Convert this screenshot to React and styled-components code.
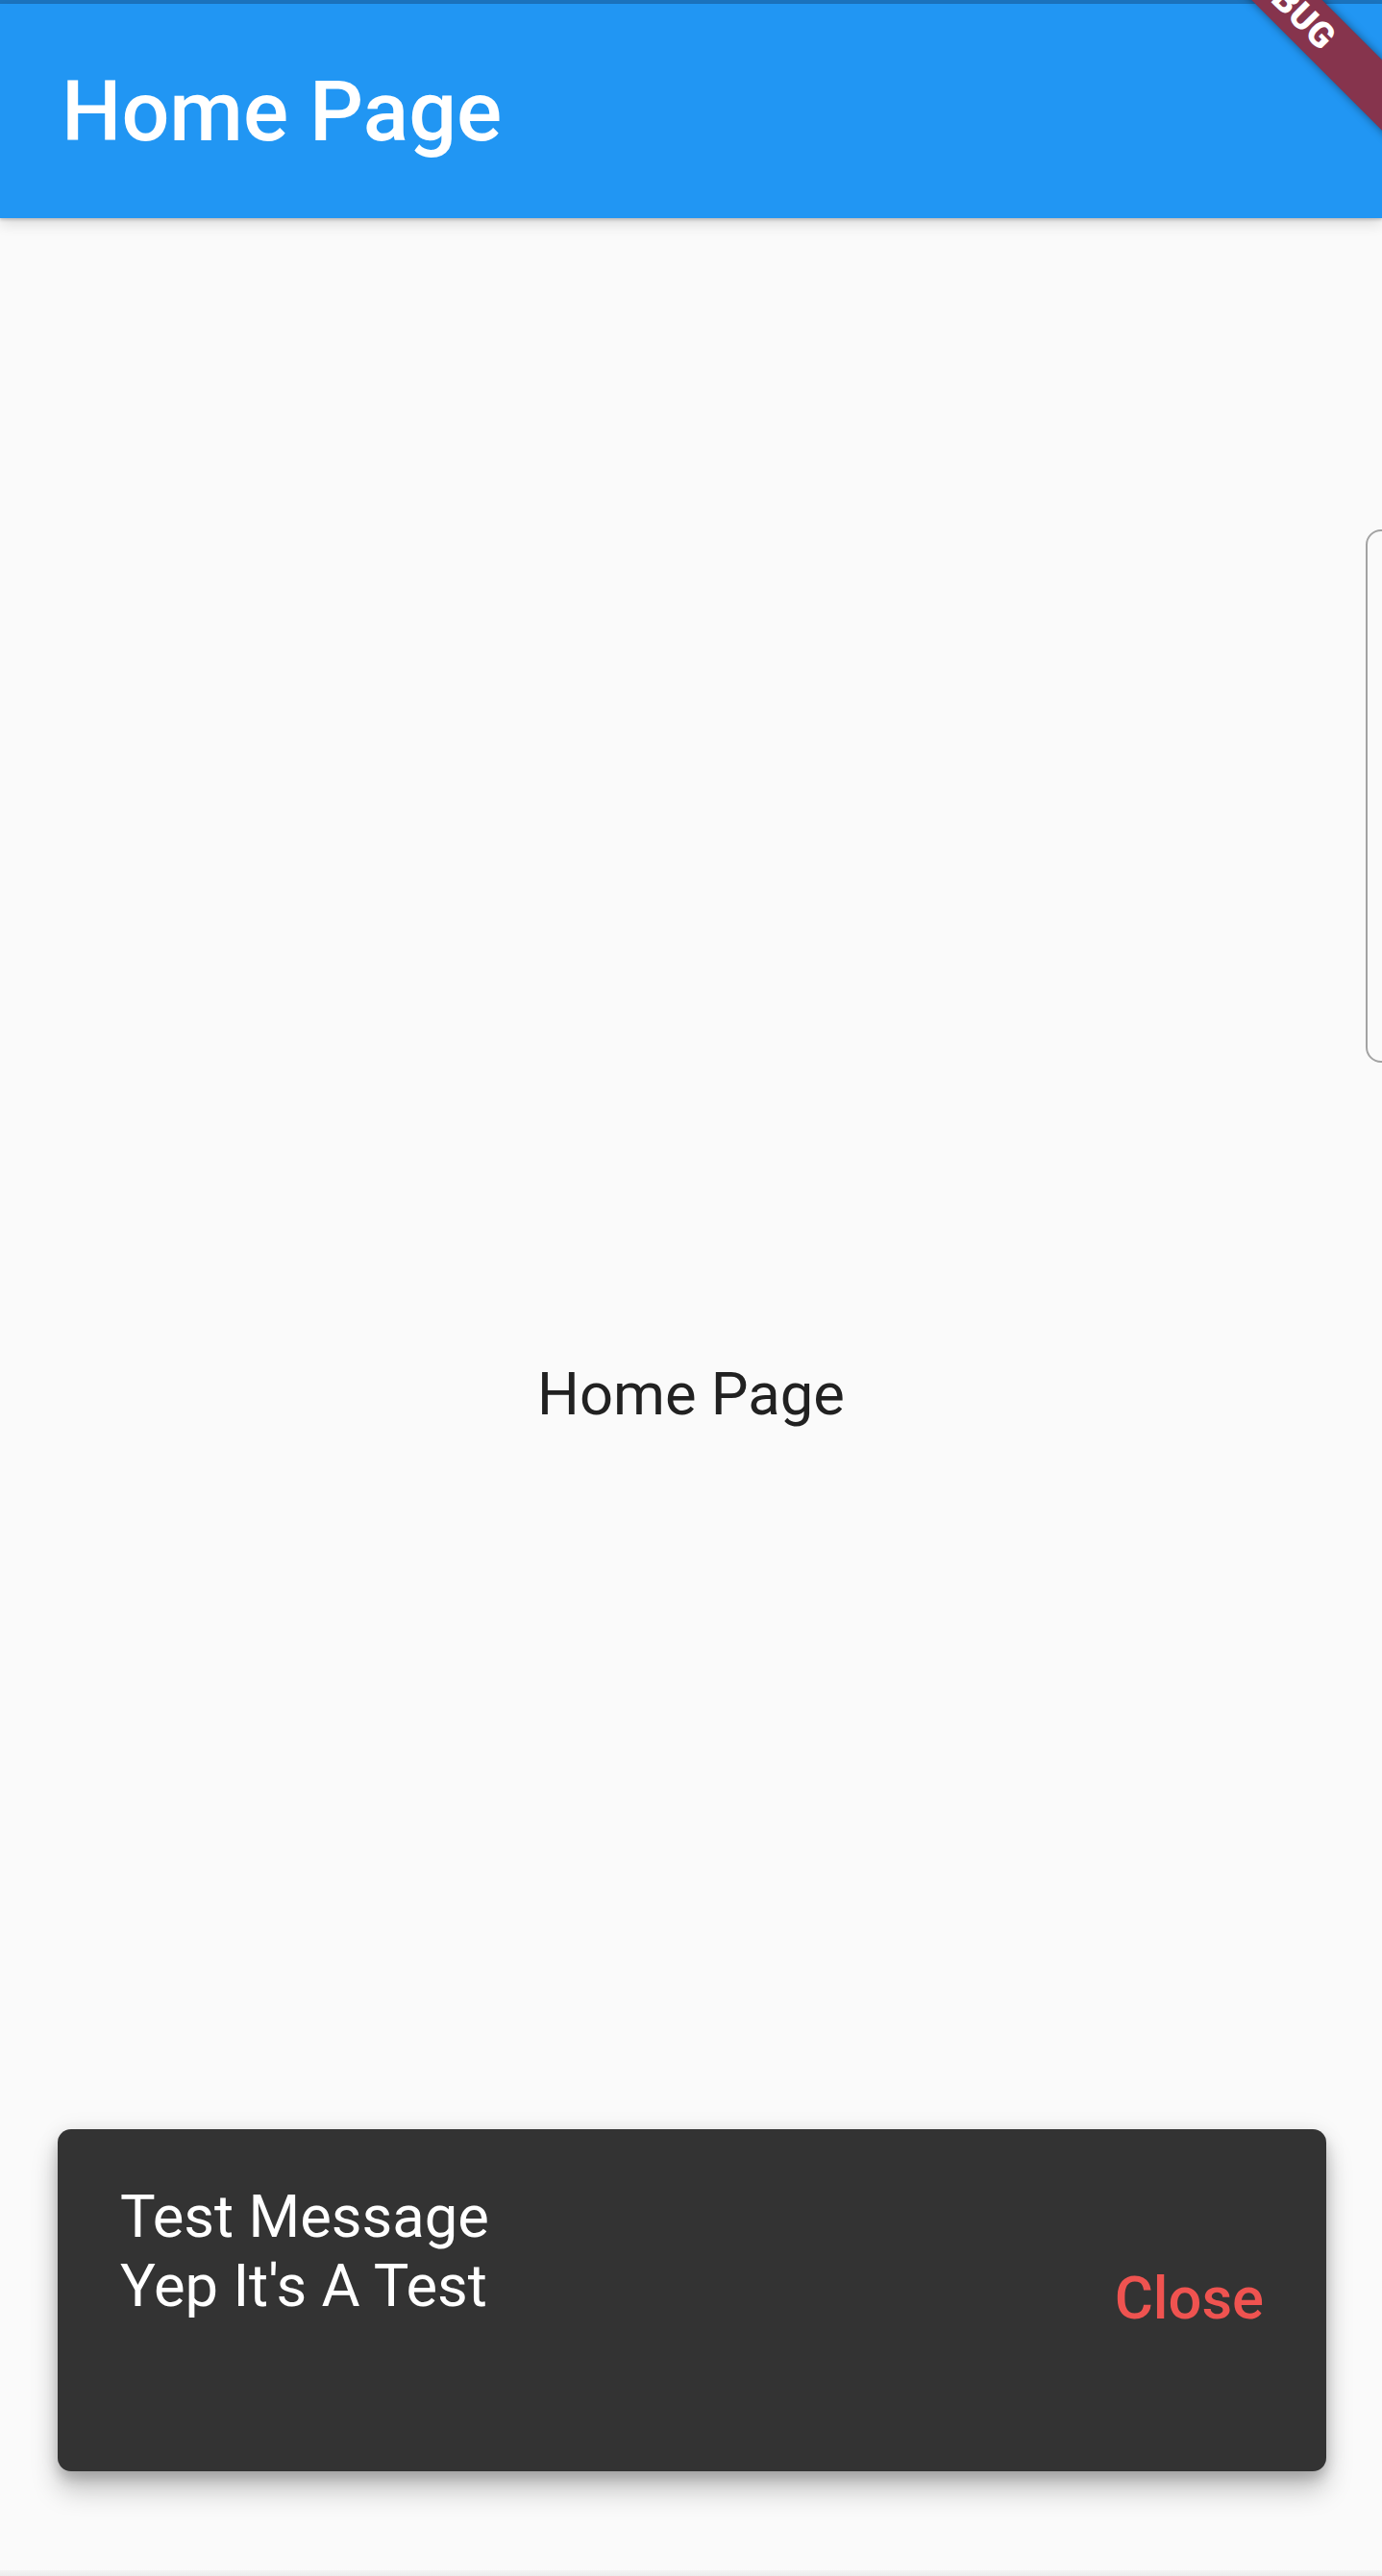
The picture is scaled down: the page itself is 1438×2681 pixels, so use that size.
import React from "react";
import styled, { createGlobalStyle } from "styled-components";

const GlobalStyle = createGlobalStyle`
  html, body {
    margin: 0;
    padding: 0;
    background: #fafafa;
  }
  body {
    font-family: Roboto, "Noto Sans", "Liberation Sans", sans-serif;
  }
`;

const Screen = styled.div`
  position: relative;
  width: 1438px;
  height: 2681px;
  overflow: hidden;
  display: flex;
  flex-direction: column;
  background: #fafafa;
`;

const StatusStrip = styled.div`
  height: 4px;
  flex: none;
  background: #1b74bf;
`;

const AppBar = styled.header`
  position: relative;
  z-index: 2;
  flex: none;
  height: 223px;
  display: flex;
  align-items: center;
  padding-left: 64px;
  background: #2196f3;
  box-shadow: 0 2px 3px rgba(0, 0, 0, 0.18), 0 6px 14px rgba(0, 0, 0, 0.12);
`;

const Title = styled.h1`
  margin: 0;
  font-size: 88px;
  font-weight: 500;
  line-height: normal;
  color: #ffffff;
`;

const Body = styled.main`
  flex: 1;
  display: flex;
  align-items: center;
  justify-content: center;
`;

const BodyText = styled.p`
  margin: 0;
  font-size: 61.5px;
  font-weight: 400;
  color: #212121;
`;

const NavEdge = styled.div`
  flex: none;
  height: 6px;
  background: linear-gradient(#f3f3f3, #ececec);
`;

const EdgeHandle = styled.div`
  position: absolute;
  left: 1421px;
  top: 551px;
  width: 60px;
  height: 551px;
  border: 2px solid #a3a3a3;
  border-radius: 16px;
`;

const Ribbon = styled.div`
  position: absolute;
  z-index: 5;
  left: 1141px;
  top: -24px;
  width: 400px;
  height: 52px;
  transform: rotate(45deg);
  background: #86344d;
  box-shadow: 0 0 10px rgba(0, 0, 0, 0.45);
  display: flex;
  align-items: center;
  justify-content: center;
`;

const RibbonText = styled.span`
  font-size: 37px;
  font-weight: 900;
  line-height: 1;
  letter-spacing: 0.5px;
  color: #ffffff;
`;

const SnackBar = styled.div`
  position: absolute;
  z-index: 3;
  left: 60px;
  right: 58px;
  bottom: 109px;
  height: 356px;
  display: flex;
  justify-content: space-between;
  border-radius: 14px;
  background: #333333;
  box-shadow: 0 20px 28px rgba(0, 0, 0, 0.22), 0 8px 12px rgba(0, 0, 0, 0.14),
    0 0 22px rgba(0, 0, 0, 0.08);
`;

const Message = styled.div`
  margin: 55px 0 0 65px;
  font-size: 61.5px;
  line-height: 72px;
  color: #ffffff;
`;

const Action = styled.button`
  align-self: center;
  margin: 0 65px 4px 0;
  padding: 0;
  border: none;
  background: transparent;
  font-family: inherit;
  font-size: 61.5px;
  font-weight: 500;
  line-height: normal;
  color: #ef5350;
  cursor: pointer;
`;

export default function App() {
  return (
    <>
      <GlobalStyle />
      <Screen>
        <StatusStrip />
        <AppBar>
          <Title>Home Page</Title>
        </AppBar>
        <Body>
          <BodyText>Home Page</BodyText>
        </Body>
        <NavEdge />
        <EdgeHandle />
        <Ribbon>
          <RibbonText>DEBUG</RibbonText>
        </Ribbon>
        <SnackBar>
          <Message>
            Test Message
            <br />
            Yep It's A Test
          </Message>
          <Action>Close</Action>
        </SnackBar>
      </Screen>
    </>
  );
}
